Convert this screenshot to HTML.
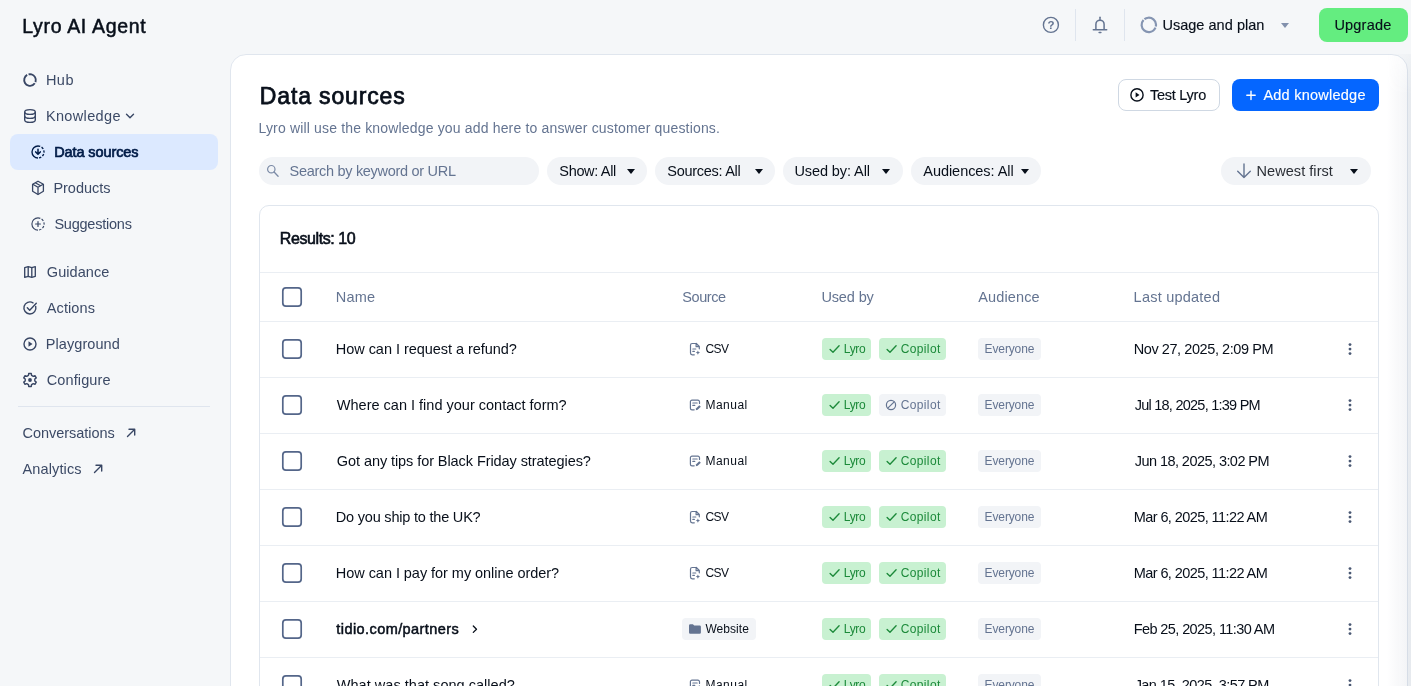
<!DOCTYPE html>
<html lang="en">
<head>
<meta charset="utf-8">
<title>Lyro AI Agent - Data sources</title>
<style>
*{box-sizing:border-box;margin:0;padding:0}
html,body{width:1411px;height:686px;overflow:hidden}
body{background:#f5f7f9;font-family:"Liberation Sans",sans-serif;color:#080f1a;position:relative}
.abs{position:absolute;white-space:nowrap}
#root{position:absolute;left:0;top:0;width:1411px;height:686px;will-change:transform}
.t{line-height:20px;height:20px}
svg{display:block;overflow:visible}
</style>
</head>
<body>
<div id="root">
<div class="abs t" style="left:22.25px;top:15.6px;font-size:19.5px;color:#080f1a;letter-spacing:0.674px;-webkit-text-stroke:0.5px #080f1a">Lyro AI Agent</div>
<div class="abs" style="left:1075px;top:9px;width:1px;height:32px;background:#dfe5ee"></div>
<div class="abs" style="left:1124px;top:9px;width:1px;height:32px;background:#dfe5ee"></div>
<svg class="abs" style="left:1041px;top:15px" width="20" height="20" viewBox="0 0 20 20"><circle cx="9.900" cy="9.900" r="7.500" fill="none" stroke="#647491" stroke-width="1.400"/><text x="9.950" y="14.100" text-anchor="middle" font-family="Liberation Sans,sans-serif" font-size="11.500" font-weight="bold" fill="#647491">?</text></svg>
<svg class="abs" style="left:1090px;top:15px" width="20" height="20" viewBox="0 0 20 20"><path d="M5.900 14.800V9.300a4.100 4.100 0 0 1 8.200 0v5.500" fill="none" stroke="#647491" stroke-width="1.500"/><path d="M3.300 14.800h13.400" stroke="#647491" stroke-width="1.500" stroke-linecap="round"/><path d="M10 2.300v2.500" stroke="#647491" stroke-width="1.500" stroke-linecap="round"/><path d="M9.100 17.400h1.800" stroke="#647491" stroke-width="1.500" stroke-linecap="round"/></svg>
<svg class="abs" style="left:1139px;top:15px" width="20" height="20" viewBox="0 0 20 20"><circle cx="9.800" cy="9.900" r="7.200" fill="none" stroke="#8595b2" stroke-width="2.200" stroke-dasharray="13.500 1.200 25 1.200 10" transform="rotate(-95 9.800 9.900)"/></svg>
<div class="abs t" style="left:1162.38px;top:15px;font-size:14.5px;color:#080f1a;letter-spacing:0.034px;-webkit-text-stroke:0.15px #080f1a">Usage and plan</div>
<div class="abs" style="left:1280.500px;top:22.500px;width:0;height:0;border-left:4.500px solid transparent;border-right:4.500px solid transparent;border-top:5px solid #8291ad"></div>
<div class="abs" style="left:1319px;top:8px;width:89px;height:34px;border-radius:8px;background:#64ed80"></div>
<div class="abs t" style="left:1334.38px;top:15px;font-size:14.5px;color:#080f1a;letter-spacing:0.216px;-webkit-text-stroke:0.15px #080f1a">Upgrade</div>
<div class="abs" style="left:10px;top:134px;width:208px;height:36px;border-radius:8px;background:#dce9ff"></div>
<svg class="abs" style="left:20px;top:70px" width="20" height="20" viewBox="0 0 20 20"><circle cx="10" cy="10" r="5.8" fill="none" stroke="#384664" stroke-width="1.9" stroke-dasharray="9.500 1.400 20.240 1.400 3.900" transform="rotate(-75 10 10)"/></svg>
<div class="abs t" style="left:45.90px;top:70px;font-size:14.5px;color:#3c4a66;letter-spacing:0.482px">Hub</div>
<svg class="abs" style="left:20px;top:106px" width="20" height="20" viewBox="0 0 20 20"><ellipse cx="10" cy="6" rx="5.300" ry="2.400" fill="none" stroke="#384664" stroke-width="1.400"/><path d="M4.700 6v8c0 1.300 2.400 2.400 5.300 2.400s5.300-1.100 5.300-2.400V6" fill="none" stroke="#384664" stroke-width="1.400"/><path d="M4.700 10c0 1.300 2.400 2.400 5.300 2.400s5.300-1.100 5.300-2.400" fill="none" stroke="#384664" stroke-width="1.400"/></svg>
<div class="abs t" style="left:45.90px;top:106px;font-size:14.5px;color:#3c4a66;letter-spacing:0.352px">Knowledge</div>
<svg class="abs" style="left:125px;top:111px" width="10" height="10" viewBox="0 0 10 10"><path d="M1.500 3.200l3.500 3.500 3.500-3.500" fill="none" stroke="#384664" stroke-width="1.400" stroke-linecap="round" stroke-linejoin="round"/></svg>
<svg class="abs" style="left:28px;top:142px" width="20" height="20" viewBox="0 0 20 20"><path d="M10 16a6 6 0 0 1 0-12" fill="none" stroke="#001b47" stroke-width="1.350"/><path d="M10 4a6 6 0 0 1 0 12" fill="none" stroke="#001b47" stroke-width="1.350" stroke-dasharray="2.300 1.450"/><path d="M10 7.200v4.600M7.700 9.900l2.300 2.400 2.300-2.400" fill="none" stroke="#001b47" stroke-width="1.500" stroke-linecap="round" stroke-linejoin="round"/></svg>
<div class="abs t" style="left:54.15px;top:142.3px;font-size:14.5px;color:#001b47;letter-spacing:-0.089px;-webkit-text-stroke:0.7px #001b47">Data sources</div>
<svg class="abs" style="left:28px;top:178px" width="20" height="20" viewBox="0 0 20 20"><path d="M10 3.200l5.400 3v7.100l-5.400 3.200-5.400-3.200V6.200z" fill="none" stroke="#384664" stroke-width="1.300" stroke-linejoin="round"/><path d="M4.800 6.300l5.200 2.900 5.200-2.900M10 9.200v7.100M7.300 4.800l5.300 3" fill="none" stroke="#384664" stroke-width="1.300" stroke-linejoin="round"/></svg>
<div class="abs t" style="left:53.40px;top:178px;font-size:14.5px;color:#3c4a66;letter-spacing:-0.010px">Products</div>
<svg class="abs" style="left:28px;top:214px" width="20" height="20" viewBox="0 0 20 20"><path d="M10 16.100a6.100 6.100 0 0 1 0-12.200" fill="none" stroke="#384664" stroke-width="1.150"/><path d="M10 3.900a6.100 6.100 0 0 1 0 12.200" fill="none" stroke="#384664" stroke-width="1.150" stroke-dasharray="2.400 1.400"/><path d="M10 7.600v4.800M7.600 10h4.800" stroke="#384664" stroke-width="1.200" stroke-linecap="round"/></svg>
<div class="abs t" style="left:54.40px;top:214px;font-size:14.5px;color:#3c4a66;letter-spacing:-0.226px">Suggestions</div>
<svg class="abs" style="left:20px;top:262px" width="20" height="20" viewBox="0 0 20 20"><path d="M4.700 5.700l3.500-1 3.600 1 3.500-1v9.600l-3.500 1-3.600-1-3.500 1z" fill="none" stroke="#384664" stroke-width="1.350" stroke-linejoin="round"/><path d="M8.200 4.700v9.600M11.800 5.700v9.600" stroke="#384664" stroke-width="1.350"/></svg>
<div class="abs t" style="left:46.80px;top:262px;font-size:14.5px;color:#3c4a66;letter-spacing:0.056px">Guidance</div>
<svg class="abs" style="left:20px;top:298px" width="20" height="20" viewBox="0 0 20 20"><path d="M15.700 8.400a6 6 0 1 1-2.700-3.600" fill="none" stroke="#384664" stroke-width="1.400" stroke-linecap="round"/><path d="M7.300 9.800l2.400 2.400 6.600-7" fill="none" stroke="#384664" stroke-width="1.400" stroke-linecap="round" stroke-linejoin="round"/></svg>
<div class="abs t" style="left:46.80px;top:298px;font-size:14.5px;color:#3c4a66;letter-spacing:0.100px">Actions</div>
<svg class="abs" style="left:20px;top:334px" width="20" height="20" viewBox="0 0 20 20"><circle cx="10" cy="10" r="6" fill="none" stroke="#384664" stroke-width="1.4"/><path d="M8.500 7.300l4 2.700-4 2.700z" fill="#384664"/></svg>
<div class="abs t" style="left:45.80px;top:334px;font-size:14.5px;color:#3c4a66;letter-spacing:0.068px">Playground</div>
<svg class="abs" style="left:20px;top:370px" width="20" height="20" viewBox="0 0 20 20"><path d="M8.70 3.53 L11.30 3.53 L11.56 5.36 L13.24 6.32 L14.95 5.64 L16.26 7.89 L14.80 9.03 L14.80 10.97 L16.26 12.11 L14.95 14.36 L13.24 13.68 L11.56 14.64 L11.30 16.47 L8.70 16.47 L8.44 14.64 L6.76 13.68 L5.05 14.36 L3.74 12.11 L5.20 10.97 L5.20 9.03 L3.74 7.89 L5.05 5.64 L6.76 6.32 L8.44 5.36Z" fill="none" stroke="#384664" stroke-width="1.400" stroke-linejoin="round"/><circle cx="10" cy="10" r="1.900" fill="#384664"/></svg>
<div class="abs t" style="left:46.80px;top:370px;font-size:14.5px;color:#3c4a66;letter-spacing:0.099px">Configure</div>
<div class="abs" style="left:18px;top:406px;width:192px;height:1px;background:#dfe5ee"></div>
<div class="abs t" style="left:22.50px;top:423px;font-size:14.5px;color:#3c4a66;letter-spacing:-0.036px">Conversations</div>
<svg class="abs" style="left:125px;top:427px" width="12" height="12" viewBox="0 0 12 12"><path d="M2.500 9.500l7-7M4 2.300h5.700V8" fill="none" stroke="#384664" stroke-width="1.400" stroke-linecap="round" stroke-linejoin="round"/></svg>
<div class="abs t" style="left:22.50px;top:459px;font-size:14.5px;color:#3c4a66;letter-spacing:0.129px">Analytics</div>
<svg class="abs" style="left:92px;top:463px" width="12" height="12" viewBox="0 0 12 12"><path d="M2.500 9.500l7-7M4 2.300h5.700V8" fill="none" stroke="#384664" stroke-width="1.400" stroke-linecap="round" stroke-linejoin="round"/></svg>
<div class="abs" style="left:230px;top:54px;width:1178px;height:700px;background:#fff;border:1px solid #e0e6ee;border-radius:16px 16px 0 0"></div>
<div class="abs t" style="left:259.77px;top:85.5px;font-size:23px;color:#080f1a;letter-spacing:0.858px;-webkit-text-stroke:0.75px #080f1a">Data sources</div>
<div class="abs t" style="left:258.50px;top:118px;font-size:14px;color:#647491;letter-spacing:0.164px">Lyro will use the knowledge you add here to answer customer questions.</div>
<div class="abs" style="left:1118px;top:79px;width:102px;height:32px;border:1px solid #cfd8e3;border-radius:8px;background:#fff"></div>
<svg class="abs" style="left:1127px;top:85px" width="20" height="20" viewBox="0 0 20 20"><circle cx="10" cy="9.9" r="6.1" fill="none" stroke="#080f1a" stroke-width="1.4"/><path d="M8.600 7.300l3.900 2.600-3.900 2.600z" fill="#080f1a"/></svg>
<div class="abs t" style="left:1150.08px;top:85px;font-size:14.5px;color:#080f1a;letter-spacing:-0.272px;-webkit-text-stroke:0.15px #080f1a">Test Lyro</div>
<div class="abs" style="left:1232px;top:79px;width:147px;height:32px;border-radius:8px;background:#0566ff"></div>
<svg class="abs" style="left:1241px;top:85px" width="20" height="20" viewBox="0 0 20 20"><path d="M10 6.100v8.400M5.800 10.300h8.400" stroke="#fff" stroke-width="1.400" stroke-linecap="round"/></svg>
<div class="abs t" style="left:1263.38px;top:85px;font-size:14.5px;color:#fff;letter-spacing:0.246px;-webkit-text-stroke:0.15px #fff">Add knowledge</div>
<div class="abs" style="left:259px;top:157px;width:280px;height:28px;border-radius:14px;background:#f2f4f7"></div>
<svg class="abs" style="left:264px;top:162px" width="16" height="16" viewBox="0 0 16 16"><circle cx="7.300" cy="7.200" r="3.700" fill="none" stroke="#7b8aa6" stroke-width="1.200"/><path d="M10.100 10l4 4.200" stroke="#7b8aa6" stroke-width="1.300" stroke-linecap="round"/></svg>
<div class="abs t" style="left:289.60px;top:161px;font-size:14.5px;color:#647491;letter-spacing:-0.300px">Search by keyword or URL</div>
<div class="abs" style="left:547px;top:157px;width:100px;height:28px;border-radius:14px;background:#f2f4f7"></div>
<div class="abs t" style="left:559.30px;top:161px;font-size:14.5px;color:#080f1a;letter-spacing:-0.328px">Show: All</div>
<div class="abs" style="left:626.6px;top:168.900px;width:0;height:0;border-left:4.700px solid transparent;border-right:4.700px solid transparent;border-top:5.100px solid #080f1a"></div>
<div class="abs" style="left:655px;top:157px;width:120px;height:28px;border-radius:14px;background:#f2f4f7"></div>
<div class="abs t" style="left:667.30px;top:161px;font-size:14.5px;color:#080f1a;letter-spacing:-0.286px">Sources: All</div>
<div class="abs" style="left:754.7px;top:168.900px;width:0;height:0;border-left:4.700px solid transparent;border-right:4.700px solid transparent;border-top:5.100px solid #080f1a"></div>
<div class="abs" style="left:783px;top:157px;width:120px;height:28px;border-radius:14px;background:#f2f4f7"></div>
<div class="abs t" style="left:794.40px;top:161px;font-size:14.5px;color:#080f1a;letter-spacing:-0.086px">Used by: All</div>
<div class="abs" style="left:882.4px;top:168.900px;width:0;height:0;border-left:4.700px solid transparent;border-right:4.700px solid transparent;border-top:5.100px solid #080f1a"></div>
<div class="abs" style="left:911px;top:157px;width:130px;height:28px;border-radius:14px;background:#f2f4f7"></div>
<div class="abs t" style="left:923.30px;top:161px;font-size:14.5px;color:#080f1a;letter-spacing:-0.051px">Audiences: All</div>
<div class="abs" style="left:1021px;top:168.900px;width:0;height:0;border-left:4.700px solid transparent;border-right:4.700px solid transparent;border-top:5.100px solid #080f1a"></div>
<div class="abs" style="left:1221px;top:157px;width:150px;height:28px;border-radius:14px;background:#f2f4f7"></div>
<svg class="abs" style="left:1234px;top:161px" width="20" height="20" viewBox="0 0 20 20"><path d="M10 3v13.500M3.700 10.300l6.300 6.300 6.300-6.300" fill="none" stroke="#647491" stroke-width="1.400" stroke-linecap="round" stroke-linejoin="round"/></svg>
<div class="abs t" style="left:1256.60px;top:161px;font-size:14.5px;color:#2b2f36;letter-spacing:0.045px">Newest first</div>
<div class="abs" style="left:1350px;top:168.900px;width:0;height:0;border-left:4.700px solid transparent;border-right:4.700px solid transparent;border-top:5.100px solid #080f1a"></div>
<div class="abs" style="left:259px;top:205px;width:1120px;height:520px;border:1px solid #e0e6ee;border-radius:10px 10px 0 0;background:#fff"></div>
<div class="abs t" style="left:279.80px;top:229.3px;font-size:16px;color:#080f1a;letter-spacing:-0.414px;-webkit-text-stroke:0.6px #080f1a">Results: 10</div>
<div class="abs" style="left:260px;top:272px;width:1118px;height:1px;background:#eaeef3"></div>
<svg class="abs" style="left:281px;top:286px" width="22" height="22" viewBox="0 0 22 22"><rect x="1.800" y="1.800" width="18.400" height="18.400" rx="3.100" fill="#fff" stroke="#546689" stroke-width="1.700"/></svg>
<div class="abs t" style="left:335.80px;top:287px;font-size:14.5px;color:#647491;letter-spacing:0.195px">Name</div>
<div class="abs t" style="left:682.30px;top:287px;font-size:14.5px;color:#647491;letter-spacing:-0.416px">Source</div>
<div class="abs t" style="left:821.40px;top:287px;font-size:14.5px;color:#647491;letter-spacing:-0.124px">Used by</div>
<div class="abs t" style="left:978.30px;top:287px;font-size:14.5px;color:#647491;letter-spacing:0.129px">Audience</div>
<div class="abs t" style="left:1133.60px;top:287px;font-size:14.5px;color:#647491;letter-spacing:0.229px">Last updated</div>
<div class="abs" style="left:260px;top:321px;width:1118px;height:1px;background:#eaeef3"></div>
<svg class="abs" style="left:281px;top:338px" width="22" height="22" viewBox="0 0 22 22"><rect x="1.800" y="1.800" width="18.400" height="18.400" rx="3.100" fill="#fff" stroke="#546689" stroke-width="1.700"/></svg>
<div class="abs t" style="left:335.80px;top:339px;font-size:14.5px;color:#080f1a;letter-spacing:-0.042px">How can I request a refund?</div>
<svg class="abs" style="left:688px;top:341px" width="14" height="16" viewBox="0 0 14 16"><path d="M8.300 2.500H4.200A1.700 1.700 0 0 0 2.500 4.200v7.900a1.700 1.700 0 0 0 1.700 1.700h2.100" fill="none" stroke="#647491" stroke-width="1.200" stroke-linecap="round"/><path d="M8.300 2.500l3 3v2.300M8.100 2.700v3h3" fill="none" stroke="#647491" stroke-width="1.200" stroke-linejoin="round" stroke-linecap="round"/><path d="M4.800 8h3M4.800 10.400h1.600" stroke="#647491" stroke-width="1.100" stroke-linecap="round"/><path d="M9.900 9.400l.7 1.500 1.500.7-1.500.7-.7 1.500-.7-1.500-1.500-.7 1.500-.7z" fill="#647491"/></svg>
<div class="abs t" style="left:705.40px;top:338.7px;font-size:12px;color:#080f1a;letter-spacing:-0.535px">CSV</div>
<div class="abs" style="left:822px;top:338px;width:49px;height:22px;border-radius:4px;background:#c8f1d1"></div>
<svg class="abs" style="left:827.5px;top:343px" width="14" height="12" viewBox="0 0 14 12"><path d="M2.100 6.400l2.900 2.800 6.100-6.400" fill="none" stroke="#1c8a3a" stroke-width="1.350" stroke-linecap="round" stroke-linejoin="round"/></svg>
<div class="abs t" style="left:843.80px;top:338.7px;font-size:12px;color:#1c8a3a;letter-spacing:-0.375px">Lyro</div>
<div class="abs" style="left:879px;top:338px;width:67px;height:22px;border-radius:4px;background:#c8f1d1"></div>
<svg class="abs" style="left:884.5px;top:343px" width="14" height="12" viewBox="0 0 14 12"><path d="M2.100 6.400l2.900 2.800 6.100-6.400" fill="none" stroke="#1c8a3a" stroke-width="1.350" stroke-linecap="round" stroke-linejoin="round"/></svg>
<div class="abs t" style="left:900.80px;top:338.7px;font-size:12px;color:#1c8a3a;letter-spacing:0.347px">Copilot</div>
<div class="abs" style="left:978px;top:338px;width:63px;height:22px;border-radius:4px;background:#f2f4f7"></div>
<div class="abs t" style="left:984.60px;top:338.7px;font-size:12px;color:#647491;letter-spacing:-0.132px">Everyone</div>
<div class="abs t" style="left:1133.70px;top:339px;font-size:14.5px;color:#080f1a;letter-spacing:-0.422px">Nov 27, 2025, 2:09 PM</div>
<svg class="abs" style="left:1345px;top:341px" width="10" height="16" viewBox="0 0 10 16"><circle cx="5" cy="3.6" r="1.450" fill="#4a5873"/><circle cx="5" cy="8.1" r="1.450" fill="#4a5873"/><circle cx="5" cy="12.6" r="1.450" fill="#4a5873"/></svg>
<div class="abs" style="left:260px;top:377px;width:1118px;height:1px;background:#eaeef3"></div>
<svg class="abs" style="left:281px;top:394px" width="22" height="22" viewBox="0 0 22 22"><rect x="1.800" y="1.800" width="18.400" height="18.400" rx="3.100" fill="#fff" stroke="#546689" stroke-width="1.700"/></svg>
<div class="abs t" style="left:336.80px;top:395px;font-size:14.5px;color:#080f1a;letter-spacing:0.005px">Where can I find your contact form?</div>
<svg class="abs" style="left:688px;top:397px" width="14" height="16" viewBox="0 0 14 16"><path d="M11.500 6.500V4.800a1.600 1.600 0 0 0-1.600-1.600H4a1.600 1.600 0 0 0-1.600 1.600v6.400A1.600 1.600 0 0 0 4 12.800h2.200" fill="none" stroke="#647491" stroke-width="1.200" stroke-linecap="round"/><path d="M4.800 6h4.400M4.800 8.400h2" stroke="#647491" stroke-width="1.100" stroke-linecap="round"/><path d="M7.800 13.200l.4-1.900 3.100-3.100 1.500 1.500-3.100 3.100z" fill="#647491"/></svg>
<div class="abs t" style="left:705.40px;top:394.7px;font-size:12px;color:#080f1a;letter-spacing:0.502px">Manual</div>
<div class="abs" style="left:822px;top:394px;width:49px;height:22px;border-radius:4px;background:#c8f1d1"></div>
<svg class="abs" style="left:827.5px;top:399px" width="14" height="12" viewBox="0 0 14 12"><path d="M2.100 6.400l2.900 2.800 6.100-6.400" fill="none" stroke="#1c8a3a" stroke-width="1.350" stroke-linecap="round" stroke-linejoin="round"/></svg>
<div class="abs t" style="left:843.80px;top:394.7px;font-size:12px;color:#1c8a3a;letter-spacing:-0.375px">Lyro</div>
<div class="abs" style="left:879px;top:394px;width:67px;height:22px;border-radius:4px;background:#f2f4f7"></div>
<svg class="abs" style="left:884px;top:398px" width="14" height="14" viewBox="0 0 14 14"><circle cx="7" cy="7" r="4.600" fill="none" stroke="#647491" stroke-width="1.200"/><path d="M3.800 10.200l6.400-6.400" stroke="#647491" stroke-width="1.200"/></svg>
<div class="abs t" style="left:900.80px;top:394.7px;font-size:12px;color:#647491;letter-spacing:0.347px">Copilot</div>
<div class="abs" style="left:978px;top:394px;width:63px;height:22px;border-radius:4px;background:#f2f4f7"></div>
<div class="abs t" style="left:984.60px;top:394.7px;font-size:12px;color:#647491;letter-spacing:-0.132px">Everyone</div>
<div class="abs t" style="left:1134.70px;top:395px;font-size:14.5px;color:#080f1a;letter-spacing:-0.754px">Jul 18, 2025, 1:39 PM</div>
<svg class="abs" style="left:1345px;top:397px" width="10" height="16" viewBox="0 0 10 16"><circle cx="5" cy="3.6" r="1.450" fill="#4a5873"/><circle cx="5" cy="8.1" r="1.450" fill="#4a5873"/><circle cx="5" cy="12.6" r="1.450" fill="#4a5873"/></svg>
<div class="abs" style="left:260px;top:433px;width:1118px;height:1px;background:#eaeef3"></div>
<svg class="abs" style="left:281px;top:450px" width="22" height="22" viewBox="0 0 22 22"><rect x="1.800" y="1.800" width="18.400" height="18.400" rx="3.100" fill="#fff" stroke="#546689" stroke-width="1.700"/></svg>
<div class="abs t" style="left:336.80px;top:451px;font-size:14.5px;color:#080f1a;letter-spacing:-0.075px">Got any tips for Black Friday strategies?</div>
<svg class="abs" style="left:688px;top:453px" width="14" height="16" viewBox="0 0 14 16"><path d="M11.500 6.500V4.800a1.600 1.600 0 0 0-1.600-1.600H4a1.600 1.600 0 0 0-1.600 1.600v6.400A1.600 1.600 0 0 0 4 12.800h2.200" fill="none" stroke="#647491" stroke-width="1.200" stroke-linecap="round"/><path d="M4.800 6h4.400M4.800 8.400h2" stroke="#647491" stroke-width="1.100" stroke-linecap="round"/><path d="M7.800 13.200l.4-1.900 3.100-3.100 1.500 1.500-3.100 3.100z" fill="#647491"/></svg>
<div class="abs t" style="left:705.40px;top:450.7px;font-size:12px;color:#080f1a;letter-spacing:0.502px">Manual</div>
<div class="abs" style="left:822px;top:450px;width:49px;height:22px;border-radius:4px;background:#c8f1d1"></div>
<svg class="abs" style="left:827.5px;top:455px" width="14" height="12" viewBox="0 0 14 12"><path d="M2.100 6.400l2.900 2.800 6.100-6.400" fill="none" stroke="#1c8a3a" stroke-width="1.350" stroke-linecap="round" stroke-linejoin="round"/></svg>
<div class="abs t" style="left:843.80px;top:450.7px;font-size:12px;color:#1c8a3a;letter-spacing:-0.375px">Lyro</div>
<div class="abs" style="left:879px;top:450px;width:67px;height:22px;border-radius:4px;background:#c8f1d1"></div>
<svg class="abs" style="left:884.5px;top:455px" width="14" height="12" viewBox="0 0 14 12"><path d="M2.100 6.400l2.900 2.800 6.100-6.400" fill="none" stroke="#1c8a3a" stroke-width="1.350" stroke-linecap="round" stroke-linejoin="round"/></svg>
<div class="abs t" style="left:900.80px;top:450.7px;font-size:12px;color:#1c8a3a;letter-spacing:0.347px">Copilot</div>
<div class="abs" style="left:978px;top:450px;width:63px;height:22px;border-radius:4px;background:#f2f4f7"></div>
<div class="abs t" style="left:984.60px;top:450.7px;font-size:12px;color:#647491;letter-spacing:-0.132px">Everyone</div>
<div class="abs t" style="left:1134.70px;top:451px;font-size:14.5px;color:#080f1a;letter-spacing:-0.551px">Jun 18, 2025, 3:02 PM</div>
<svg class="abs" style="left:1345px;top:453px" width="10" height="16" viewBox="0 0 10 16"><circle cx="5" cy="3.6" r="1.450" fill="#4a5873"/><circle cx="5" cy="8.1" r="1.450" fill="#4a5873"/><circle cx="5" cy="12.6" r="1.450" fill="#4a5873"/></svg>
<div class="abs" style="left:260px;top:489px;width:1118px;height:1px;background:#eaeef3"></div>
<svg class="abs" style="left:281px;top:506px" width="22" height="22" viewBox="0 0 22 22"><rect x="1.800" y="1.800" width="18.400" height="18.400" rx="3.100" fill="#fff" stroke="#546689" stroke-width="1.700"/></svg>
<div class="abs t" style="left:335.80px;top:507px;font-size:14.5px;color:#080f1a;letter-spacing:-0.202px">Do you ship to the UK?</div>
<svg class="abs" style="left:688px;top:509px" width="14" height="16" viewBox="0 0 14 16"><path d="M8.300 2.500H4.200A1.700 1.700 0 0 0 2.500 4.200v7.900a1.700 1.700 0 0 0 1.700 1.700h2.100" fill="none" stroke="#647491" stroke-width="1.200" stroke-linecap="round"/><path d="M8.300 2.500l3 3v2.300M8.100 2.700v3h3" fill="none" stroke="#647491" stroke-width="1.200" stroke-linejoin="round" stroke-linecap="round"/><path d="M4.800 8h3M4.800 10.400h1.600" stroke="#647491" stroke-width="1.100" stroke-linecap="round"/><path d="M9.900 9.400l.7 1.500 1.500.7-1.500.7-.7 1.500-.7-1.500-1.500-.7 1.500-.7z" fill="#647491"/></svg>
<div class="abs t" style="left:705.40px;top:506.7px;font-size:12px;color:#080f1a;letter-spacing:-0.535px">CSV</div>
<div class="abs" style="left:822px;top:506px;width:49px;height:22px;border-radius:4px;background:#c8f1d1"></div>
<svg class="abs" style="left:827.5px;top:511px" width="14" height="12" viewBox="0 0 14 12"><path d="M2.100 6.400l2.900 2.800 6.100-6.400" fill="none" stroke="#1c8a3a" stroke-width="1.350" stroke-linecap="round" stroke-linejoin="round"/></svg>
<div class="abs t" style="left:843.80px;top:506.7px;font-size:12px;color:#1c8a3a;letter-spacing:-0.375px">Lyro</div>
<div class="abs" style="left:879px;top:506px;width:67px;height:22px;border-radius:4px;background:#c8f1d1"></div>
<svg class="abs" style="left:884.5px;top:511px" width="14" height="12" viewBox="0 0 14 12"><path d="M2.100 6.400l2.900 2.800 6.100-6.400" fill="none" stroke="#1c8a3a" stroke-width="1.350" stroke-linecap="round" stroke-linejoin="round"/></svg>
<div class="abs t" style="left:900.80px;top:506.7px;font-size:12px;color:#1c8a3a;letter-spacing:0.347px">Copilot</div>
<div class="abs" style="left:978px;top:506px;width:63px;height:22px;border-radius:4px;background:#f2f4f7"></div>
<div class="abs t" style="left:984.60px;top:506.7px;font-size:12px;color:#647491;letter-spacing:-0.132px">Everyone</div>
<div class="abs t" style="left:1133.70px;top:507px;font-size:14.5px;color:#080f1a;letter-spacing:-0.577px">Mar 6, 2025, 11:22 AM</div>
<svg class="abs" style="left:1345px;top:509px" width="10" height="16" viewBox="0 0 10 16"><circle cx="5" cy="3.6" r="1.450" fill="#4a5873"/><circle cx="5" cy="8.1" r="1.450" fill="#4a5873"/><circle cx="5" cy="12.6" r="1.450" fill="#4a5873"/></svg>
<div class="abs" style="left:260px;top:545px;width:1118px;height:1px;background:#eaeef3"></div>
<svg class="abs" style="left:281px;top:562px" width="22" height="22" viewBox="0 0 22 22"><rect x="1.800" y="1.800" width="18.400" height="18.400" rx="3.100" fill="#fff" stroke="#546689" stroke-width="1.700"/></svg>
<div class="abs t" style="left:335.80px;top:563px;font-size:14.5px;color:#080f1a;letter-spacing:-0.045px">How can I pay for my online order?</div>
<svg class="abs" style="left:688px;top:565px" width="14" height="16" viewBox="0 0 14 16"><path d="M8.300 2.500H4.200A1.700 1.700 0 0 0 2.500 4.200v7.900a1.700 1.700 0 0 0 1.700 1.700h2.100" fill="none" stroke="#647491" stroke-width="1.200" stroke-linecap="round"/><path d="M8.300 2.500l3 3v2.300M8.100 2.700v3h3" fill="none" stroke="#647491" stroke-width="1.200" stroke-linejoin="round" stroke-linecap="round"/><path d="M4.800 8h3M4.800 10.400h1.600" stroke="#647491" stroke-width="1.100" stroke-linecap="round"/><path d="M9.900 9.400l.7 1.500 1.500.7-1.500.7-.7 1.500-.7-1.500-1.500-.7 1.500-.7z" fill="#647491"/></svg>
<div class="abs t" style="left:705.40px;top:562.7px;font-size:12px;color:#080f1a;letter-spacing:-0.535px">CSV</div>
<div class="abs" style="left:822px;top:562px;width:49px;height:22px;border-radius:4px;background:#c8f1d1"></div>
<svg class="abs" style="left:827.5px;top:567px" width="14" height="12" viewBox="0 0 14 12"><path d="M2.100 6.400l2.900 2.800 6.100-6.400" fill="none" stroke="#1c8a3a" stroke-width="1.350" stroke-linecap="round" stroke-linejoin="round"/></svg>
<div class="abs t" style="left:843.80px;top:562.7px;font-size:12px;color:#1c8a3a;letter-spacing:-0.375px">Lyro</div>
<div class="abs" style="left:879px;top:562px;width:67px;height:22px;border-radius:4px;background:#c8f1d1"></div>
<svg class="abs" style="left:884.5px;top:567px" width="14" height="12" viewBox="0 0 14 12"><path d="M2.100 6.400l2.900 2.800 6.100-6.400" fill="none" stroke="#1c8a3a" stroke-width="1.350" stroke-linecap="round" stroke-linejoin="round"/></svg>
<div class="abs t" style="left:900.80px;top:562.7px;font-size:12px;color:#1c8a3a;letter-spacing:0.347px">Copilot</div>
<div class="abs" style="left:978px;top:562px;width:63px;height:22px;border-radius:4px;background:#f2f4f7"></div>
<div class="abs t" style="left:984.60px;top:562.7px;font-size:12px;color:#647491;letter-spacing:-0.132px">Everyone</div>
<div class="abs t" style="left:1133.70px;top:563px;font-size:14.5px;color:#080f1a;letter-spacing:-0.577px">Mar 6, 2025, 11:22 AM</div>
<svg class="abs" style="left:1345px;top:565px" width="10" height="16" viewBox="0 0 10 16"><circle cx="5" cy="3.6" r="1.450" fill="#4a5873"/><circle cx="5" cy="8.1" r="1.450" fill="#4a5873"/><circle cx="5" cy="12.6" r="1.450" fill="#4a5873"/></svg>
<div class="abs" style="left:260px;top:601px;width:1118px;height:1px;background:#eaeef3"></div>
<svg class="abs" style="left:281px;top:618px" width="22" height="22" viewBox="0 0 22 22"><rect x="1.800" y="1.800" width="18.400" height="18.400" rx="3.100" fill="#fff" stroke="#546689" stroke-width="1.700"/></svg>
<div class="abs t" style="left:336.35px;top:619px;font-size:14.5px;color:#080f1a;letter-spacing:0.418px;-webkit-text-stroke:0.5px #080f1a">tidio.com/partners</div>
<svg class="abs" style="left:470px;top:623px" width="10" height="12" viewBox="0 0 10 12"><path d="M3.300 3l3.200 3.200-3.200 3.200" fill="none" stroke="#080f1a" stroke-width="1.300" stroke-linecap="round" stroke-linejoin="round"/></svg>
<div class="abs" style="left:682px;top:618px;width:74px;height:22px;border-radius:4px;background:#f2f4f7"></div>
<svg class="abs" style="left:688px;top:622px" width="14" height="14" viewBox="0 0 14 14"><path d="M1 3.500A1.300 1.300 0 0 1 2.300 2.200h2.600l1.300 1.200h5.400A1.300 1.300 0 0 1 12.900 4.700v5.800a1.300 1.300 0 0 1-1.300 1.300H2.300A1.300 1.300 0 0 1 1 10.500z" fill="#647491"/></svg>
<div class="abs t" style="left:705.40px;top:618.7px;font-size:12px;color:#080f1a;letter-spacing:0.057px">Website</div>
<div class="abs" style="left:822px;top:618px;width:49px;height:22px;border-radius:4px;background:#c8f1d1"></div>
<svg class="abs" style="left:827.5px;top:623px" width="14" height="12" viewBox="0 0 14 12"><path d="M2.100 6.400l2.900 2.800 6.100-6.400" fill="none" stroke="#1c8a3a" stroke-width="1.350" stroke-linecap="round" stroke-linejoin="round"/></svg>
<div class="abs t" style="left:843.80px;top:618.7px;font-size:12px;color:#1c8a3a;letter-spacing:-0.375px">Lyro</div>
<div class="abs" style="left:879px;top:618px;width:67px;height:22px;border-radius:4px;background:#c8f1d1"></div>
<svg class="abs" style="left:884.5px;top:623px" width="14" height="12" viewBox="0 0 14 12"><path d="M2.100 6.400l2.900 2.800 6.100-6.400" fill="none" stroke="#1c8a3a" stroke-width="1.350" stroke-linecap="round" stroke-linejoin="round"/></svg>
<div class="abs t" style="left:900.80px;top:618.7px;font-size:12px;color:#1c8a3a;letter-spacing:0.347px">Copilot</div>
<div class="abs" style="left:978px;top:618px;width:63px;height:22px;border-radius:4px;background:#f2f4f7"></div>
<div class="abs t" style="left:984.60px;top:618.7px;font-size:12px;color:#647491;letter-spacing:-0.132px">Everyone</div>
<div class="abs t" style="left:1133.70px;top:619px;font-size:14.5px;color:#080f1a;letter-spacing:-0.592px">Feb 25, 2025, 11:30 AM</div>
<svg class="abs" style="left:1345px;top:621px" width="10" height="16" viewBox="0 0 10 16"><circle cx="5" cy="3.6" r="1.450" fill="#4a5873"/><circle cx="5" cy="8.1" r="1.450" fill="#4a5873"/><circle cx="5" cy="12.6" r="1.450" fill="#4a5873"/></svg>
<div class="abs" style="left:260px;top:657px;width:1118px;height:1px;background:#eaeef3"></div>
<svg class="abs" style="left:281px;top:674px" width="22" height="22" viewBox="0 0 22 22"><rect x="1.800" y="1.800" width="18.400" height="18.400" rx="3.100" fill="#fff" stroke="#546689" stroke-width="1.700"/></svg>
<div class="abs t" style="left:336.80px;top:675px;font-size:14.5px;color:#080f1a;letter-spacing:0.030px">What was that song called?</div>
<svg class="abs" style="left:688px;top:677px" width="14" height="16" viewBox="0 0 14 16"><path d="M11.500 6.500V4.800a1.600 1.600 0 0 0-1.600-1.600H4a1.600 1.600 0 0 0-1.600 1.600v6.400A1.600 1.600 0 0 0 4 12.800h2.200" fill="none" stroke="#647491" stroke-width="1.200" stroke-linecap="round"/><path d="M4.800 6h4.400M4.800 8.400h2" stroke="#647491" stroke-width="1.100" stroke-linecap="round"/><path d="M7.800 13.200l.4-1.900 3.100-3.100 1.500 1.500-3.100 3.100z" fill="#647491"/></svg>
<div class="abs t" style="left:705.40px;top:674.7px;font-size:12px;color:#080f1a;letter-spacing:0.502px">Manual</div>
<div class="abs" style="left:822px;top:674px;width:49px;height:22px;border-radius:4px;background:#c8f1d1"></div>
<svg class="abs" style="left:827.5px;top:679px" width="14" height="12" viewBox="0 0 14 12"><path d="M2.100 6.400l2.900 2.800 6.100-6.400" fill="none" stroke="#1c8a3a" stroke-width="1.350" stroke-linecap="round" stroke-linejoin="round"/></svg>
<div class="abs t" style="left:843.80px;top:674.7px;font-size:12px;color:#1c8a3a;letter-spacing:-0.375px">Lyro</div>
<div class="abs" style="left:879px;top:674px;width:67px;height:22px;border-radius:4px;background:#c8f1d1"></div>
<svg class="abs" style="left:884.5px;top:679px" width="14" height="12" viewBox="0 0 14 12"><path d="M2.100 6.400l2.900 2.800 6.100-6.400" fill="none" stroke="#1c8a3a" stroke-width="1.350" stroke-linecap="round" stroke-linejoin="round"/></svg>
<div class="abs t" style="left:900.80px;top:674.7px;font-size:12px;color:#1c8a3a;letter-spacing:0.347px">Copilot</div>
<div class="abs" style="left:978px;top:674px;width:63px;height:22px;border-radius:4px;background:#f2f4f7"></div>
<div class="abs t" style="left:984.60px;top:674.7px;font-size:12px;color:#647491;letter-spacing:-0.132px">Everyone</div>
<div class="abs t" style="left:1134.70px;top:675px;font-size:14.5px;color:#080f1a;letter-spacing:-0.566px">Jan 15, 2025, 3:57 PM</div>
<svg class="abs" style="left:1345px;top:677px" width="10" height="16" viewBox="0 0 10 16"><circle cx="5" cy="3.6" r="1.450" fill="#4a5873"/><circle cx="5" cy="8.1" r="1.450" fill="#4a5873"/><circle cx="5" cy="12.6" r="1.450" fill="#4a5873"/></svg>
<div class="abs" style="left:1386px;top:54px;width:25px;height:640px;background:linear-gradient(90deg,rgba(100,116,145,0),rgba(100,116,145,.09));-webkit-mask-image:linear-gradient(180deg,rgba(0,0,0,.4),#000 40px);mask-image:linear-gradient(180deg,rgba(0,0,0,.4),#000 40px)"></div>
</div>
</body>
</html>
